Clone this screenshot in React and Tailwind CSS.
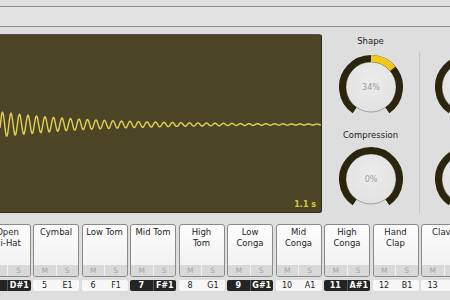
import React from "react";

function wavePath() {
  const cy = 89.5;
  let d = "";
  for (let x = 0; x <= 322; x += 0.5) {
    const a = 12.5 * Math.exp(-x / 95);
    const y = cy - a * Math.cos((2 * Math.PI * (x - 2.5)) / 8.5);
    d += (x === 0 ? "M" : "L") + x.toFixed(1) + " " + y.toFixed(2) + " ";
  }
  return d;
}

function Knob({ text, yellow }) {
  return (
    <svg width="64" height="64" viewBox="0 0 64 64" className="shrink-0">
      <defs>
        <radialGradient id="kb" cx="50%" cy="40%" r="60%">
          <stop offset="0%" stopColor="#ececec" />
          <stop offset="100%" stopColor="#e2e2e2" />
        </radialGradient>
      </defs>
      <circle cx="32" cy="32" r="25" fill="url(#kb)" stroke="#8f8f8f" strokeWidth="0.8" />
      <path
        d="M15.65 55.35 A28.5 28.5 0 1 1 48.35 55.35"
        fill="none"
        stroke="#2a250c"
        strokeWidth="7"
      />
      {yellow && (
        <path
          d="M32 3.5 A28.5 28.5 0 0 1 53.83 13.68"
          fill="none"
          stroke="#f1c61f"
          strokeWidth="7"
        />
      )}
      {text && (
        <text
          x="32"
          y="35"
          textAnchor="middle"
          fontSize="8"
          fill="#9a9a9a"
          fontFamily="DejaVu Sans, sans-serif"
        >
          {text}
        </text>
      )}
    </svg>
  );
}

const pads = [
  { l: ["Open", "Hi-Hat"], n: "4", note: "D#1", dark: true },
  { l: ["Cymbal"], n: "5", note: "E1" },
  { l: ["Low Tom"], n: "6", note: "F1" },
  { l: ["Mid Tom"], n: "7", note: "F#1", dark: true },
  { l: ["High", "Tom"], n: "8", note: "G1" },
  { l: ["Low", "Conga"], n: "9", note: "G#1", dark: true },
  { l: ["Mid", "Conga"], n: "10", note: "A1" },
  { l: ["High", "Conga"], n: "11", note: "A#1", dark: true },
  { l: ["Hand", "Clap"], n: "12", note: "B1" },
  { l: ["Clave"], n: "13", note: "C2" },
];

function Pad({ p }) {
  return (
    <div className="flex w-[46px] shrink-0 flex-col">
      <div className="flex h-[53px] flex-col overflow-hidden rounded-[3px] border border-[#8a8a8a] bg-gradient-to-b from-[#fdfdfd] to-[#efefef]">
        <div className="flex-1 whitespace-nowrap pt-[2px] text-center text-[8.5px] leading-[11px] text-[#1e1e1e]">
          {p.l.map((t) => (
            <div key={t}>{t}</div>
          ))}
        </div>
        <div className="flex h-[11px] bg-[#d9d9d9] text-center text-[7.5px] leading-[11px] text-[#a3a3a3]">
          <div className="flex-1 border-r border-[#f2f2f2]">M</div>
          <div className="flex-1">S</div>
        </div>
      </div>
      <div
        className={
          p.dark
            ? "mt-[3px] flex h-[11px] rounded-[2px] bg-[#242424] text-center text-[8px] font-bold leading-[11px] text-white"
            : "mt-[3px] flex h-[11px] rounded-[2px] bg-[#f7f7f7] text-center text-[8px] leading-[11px] text-[#222]"
        }
      >
        <div className={p.dark ? "flex-1 border-r border-[#5a5a5a]" : "flex-1"}>{p.n}</div>
        <div className="flex-1">{p.note}</div>
      </div>
    </div>
  );
}

export default function App() {
  const d = wavePath();
  return (
    <div className="h-[300px] w-[450px] overflow-hidden bg-[#dedede] font-['DejaVu_Sans',sans-serif]">
      <div className="h-[6px]" />
      <div className="h-[21px] border-y border-[#8e8e8e] bg-[#e3e3e3]" />
      <div className="h-[7px]" />
      <div className="flex h-[179px]">
        <div className="relative w-[322px] shrink-0 overflow-hidden rounded-r-[3px] border-t border-r border-b border-t-[#58544a] border-r-[#2e2a16] border-b-[#2e2a16] bg-[#4c4627]">
          <svg width="321" height="177" className="block">
            <path d={d} fill="none" stroke="#e6cf57" strokeWidth="1.4" />
          </svg>
          <div className="absolute bottom-[2px] right-[5px] text-[8px] font-bold leading-[10px] text-[#d8c53c]">
            1.1 s
          </div>
        </div>
        <div className="flex w-[97px] shrink-0 flex-col items-center pt-[1px]">
          <div className="h-[12px] text-[8.5px] leading-[12px] text-[#1d1d1d]">Shape</div>
          <div className="mt-[8px]">
            <Knob text="34%" yellow />
          </div>
          <div className="mt-[10px] h-[12px] text-[8.5px] leading-[12px] text-[#1d1d1d]">Compression</div>
          <div className="mt-[6px]">
            <Knob text="0%" />
          </div>
        </div>
        <div className="mt-[18px] h-[161px] w-px shrink-0 bg-[#c6c6c6]" />
        <div className="flex w-[64px] shrink-0 flex-col pl-[15px] pt-[1px]">
          <div className="h-[12px]" />
          <div className="mt-[8px]">
            <Knob />
          </div>
          <div className="mt-[10px] h-[12px]" />
          <div className="mt-[6px]">
            <Knob />
          </div>
        </div>
      </div>
      <div className="ml-[-15.5px] mt-[11px] flex gap-[2.5px]">
        {pads.map((p) => (
          <Pad key={p.n} p={p} />
        ))}
      </div>
    </div>
  );
}
